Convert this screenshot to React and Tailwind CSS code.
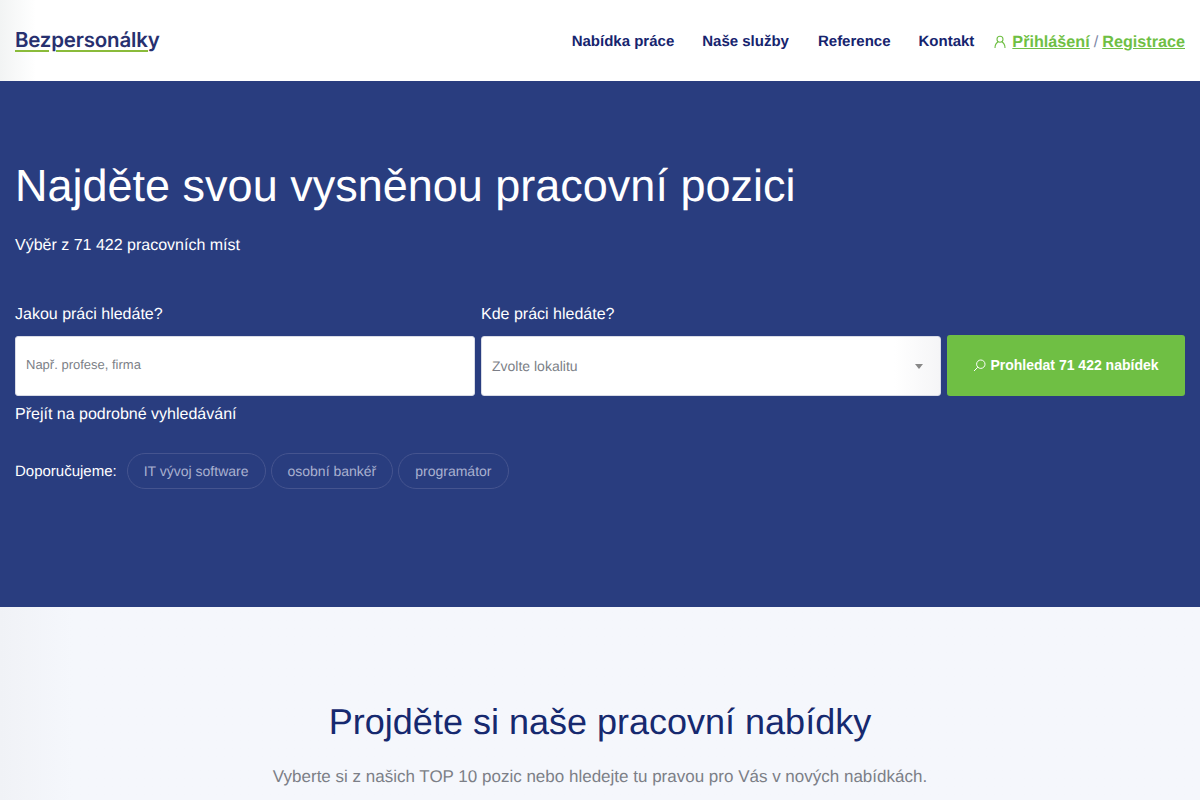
import React from "react";

function Logo() {
  return (
    <div className="relative w-[144px] h-[26px]">
      <span className="block font-['Inter',sans-serif] font-semibold text-[20.5px] leading-[24px] tracking-[-0.2px] text-[#27306f]">
        Bezpersonálky
      </span>
      {/* green line under the wordmark, broken by the p descender */}
      <div className="absolute left-0 top-[22px] w-[34px] h-[2px] bg-[#8abb3a]" />
      <div className="absolute left-[41px] top-[22px] w-[92px] h-[2px] bg-[#8abb3a]" />
    </div>
  );
}

function UserIcon() {
  return (
    <svg width="12" height="14" viewBox="0 0 12 14" fill="none" stroke="#6fbf44" strokeWidth="1.1">
      <circle cx="6" cy="4.2" r="3" />
      <path d="M1 13c0-3 1.6-5.2 3-6M11 13c0-3-1.6-5.2-3-6" />
    </svg>
  );
}

function SearchIcon() {
  return (
    <svg width="13" height="13" viewBox="0 0 13 13" fill="none" stroke="#fff" strokeWidth="1">
      <circle cx="7.8" cy="5.2" r="4.2" />
      <path d="M4.8 8.2 1 12" />
    </svg>
  );
}

function Chip({ children }) {
  return (
    <a className="h-[36px] px-4 flex items-center rounded-full border border-[#45548f] text-[14px] text-[#a9b1d0]">
      {children}
    </a>
  );
}

export default function App() {
  return (
    <div className="font-['Liberation_Sans',Arial,sans-serif] [text-rendering:geometricPrecision] h-[800px] overflow-hidden bg-white">
      <header className="h-[81px] px-[15px] flex items-center justify-between bg-gradient-to-r from-[#f2f4f4] to-white to-[3%]">
        <Logo />
        <nav className="flex items-center pt-[4px] text-[15px] font-bold text-[#16246e]">
          <a className="mr-[28px]">Nabídka práce</a>
          <a className="mr-[29px]">Naše služby</a>
          <a className="mr-[28px]">Reference</a>
          <a className="mr-[20px]">Kontakt</a>
          <span className="flex items-center text-[16.2px] text-[#6fbf44]">
            <span className="mr-[6px] flex"><UserIcon /></span>
            <a className="underline">Přihlášení</a>
            <span className="mx-[4px] font-normal text-[#7f8aa8]">/</span>
            <a className="underline">Registrace</a>
          </span>
        </nav>
      </header>

      <section className="h-[526px] bg-[#293d7f] px-[15px] pt-[76px] text-white">
        <h1 className="text-[45px] leading-[58px] font-normal">Najděte svou vysněnou pracovní pozici</h1>
        <p className="mt-[20px] text-[16px] leading-[22px]">Výběr z 71 422 pracovních míst</p>

        <div className="mt-[47px] flex gap-[6px] text-[16px] leading-[22px]">
          <label className="w-[460px]">Jakou práci hledáte?</label>
          <label className="w-[460px]">Kde práci hledáte?</label>
        </div>
        <div className="mt-[9px] flex gap-[6px] items-end">
          <div className="w-[460px] h-[60px] rounded-[3px] bg-white border border-[#d8dbe6] px-[10px] pb-[2px] flex items-center text-[13px] text-[#7c7f87]">
            Např. profese, firma
          </div>
          <div className="w-[460px] h-[60px] rounded-[3px] bg-gradient-to-r from-white from-[90%] to-[#f5f5f7] border border-[#d8dbe6] pl-[10px] pr-[17px] flex items-center justify-between text-[14px] text-[#7c7f87]">
            <span>Zvolte lokalitu</span>
            <span className="w-0 h-0 border-x-[4px] border-x-transparent border-t-[5px] border-t-[#888]" />
          </div>
          <button className="w-[238px] h-[61px] rounded-[3px] bg-[#6fbf44] flex items-center justify-center gap-[4px] text-[14px] font-bold text-white">
            <SearchIcon />
            Prohledat 71 422 nabídek
          </button>
        </div>
        <a className="block mt-[8px] text-[16px] leading-[22px]">Přejít na podrobné vyhledávání</a>

        <div className="mt-[27px] flex items-center gap-[5px] text-[15px]">
          <span className="mr-[5px] pt-[2px]">Doporučujeme:</span>
          <Chip>IT vývoj software</Chip>
          <Chip>osobní bankéř</Chip>
          <Chip>programátor</Chip>
        </div>
      </section>

      <section className="h-[193px] pt-[90px] text-center bg-gradient-to-r from-[#f0f2f6] to-[#f5f7fc] to-[6%]">
        <h2 className="text-[36px] leading-[50px] text-[#16296f]">Projděte si naše pracovní nabídky</h2>
        <p className="mt-[18px] text-[17px] leading-[24px] text-[#7c7f87]">
          Vyberte si z našich TOP 10 pozic nebo hledejte tu pravou pro Vás v nových nabídkách.
        </p>
      </section>
    </div>
  );
}
